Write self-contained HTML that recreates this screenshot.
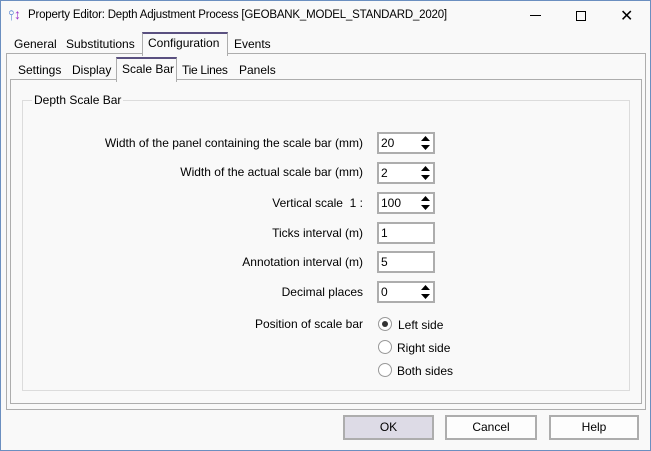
<!DOCTYPE html>
<html><head><style>
body{margin:0;width:651px;height:451px;overflow:hidden;background:#f9f9f9;font-family:"Liberation Sans",sans-serif;font-size:12px;color:#000;position:relative}
.a{position:absolute;white-space:nowrap}
.win{position:absolute;left:0;top:0;width:649px;height:449px;border:1px solid #6b8fc0}
.box{position:absolute;border:1px solid #adadad}
.lbl{position:absolute;right:288px;white-space:nowrap}
.inp{position:absolute;left:377px;width:52px;height:18px;border:2px solid #adadad;background:#fff;line-height:18px;padding-left:2px;box-sizing:content-box}
.spin{position:absolute;right:2px;top:1px;width:11px;height:16px}
.rad{position:absolute;left:378px;width:12px;height:12px;border:1px solid #999;border-radius:50%;background:#fff}
.btn{position:absolute;top:415px;height:21px;border:2px solid #adadad;background:#fdfdfd;text-align:center;line-height:21px}
</style></head><body>
<div class="win"></div>
<div class="a" style="left:8px;top:7px;color:#4477cc;font-size:14px">⫯</div>
<div class="a" style="left:14px;top:6px;color:#9933cc;font-size:14px">↕</div>
<div class="a" style="left:28px;top:9px;font-size:11.5px;letter-spacing:-0.2px">Property Editor: Depth Adjustment Process [GEOBANK_MODEL_STANDARD_2020]</div>
<div class="a" style="left:530px;top:15px;width:11px;height:1px;background:#000"></div>
<div class="a" style="left:576px;top:11px;width:8px;height:8px;border:1px solid #000"></div>
<div class="a" style="left:620px;top:6px;font-size:16px">✕</div>

<div class="box" style="left:6px;top:53px;width:638px;height:355px"></div>
<div class="a" style="left:142px;top:32px;width:84px;height:22px;background:#f9f9f9;border:1px solid #adadad;border-bottom:none;border-top:2px solid #5a5080"></div>
<div class="a" style="left:14px;top:37px">General</div>
<div class="a" style="left:66px;top:37px">Substitutions</div>
<div class="a" style="left:148px;top:36px">Configuration</div>
<div class="a" style="left:234px;top:37px">Events</div>

<div class="box" style="left:10px;top:79px;width:630px;height:323px"></div>
<div class="a" style="left:116px;top:57px;width:59px;height:23px;background:#f9f9f9;border:1px solid #adadad;border-bottom:none;border-top:2px solid #5a5080"></div>
<div class="a" style="left:18px;top:63px">Settings</div>
<div class="a" style="left:72px;top:63px">Display</div>
<div class="a" style="left:122px;top:62px">Scale Bar</div>
<div class="a" style="left:182px;top:63px;letter-spacing:-0.3px">Tie Lines</div>
<div class="a" style="left:239px;top:63px">Panels</div>

<div class="a" style="left:22px;top:100px;width:606px;height:289px;border:1px solid #dcdcdc"></div>
<div class="a" style="left:32px;top:93px;background:#f9f9f9;padding:0 2px">Depth Scale Bar</div>

<div class="lbl" style="top:136px">Width of the panel containing the scale bar (mm)</div>
<div class="lbl" style="top:165px">Width of the actual scale bar (mm)</div>
<div class="lbl" style="top:196px">Vertical scale&nbsp; 1 :</div>
<div class="lbl" style="top:226px">Ticks interval (m)</div>
<div class="lbl" style="top:255px">Annotation interval (m)</div>
<div class="lbl" style="top:285px">Decimal places</div>
<div class="lbl" style="top:317px">Position of scale bar</div>

<div class="inp" style="top:132px">20<svg class="spin" viewBox="0 0 11 16"><path d="M1 6L5.5 1L10 6Z M1 10L5.5 15L10 10Z" fill="#000"/></svg></div>
<div class="inp" style="top:162px">2<svg class="spin" viewBox="0 0 11 16"><path d="M1 6L5.5 1L10 6Z M1 10L5.5 15L10 10Z" fill="#000"/></svg></div>
<div class="inp" style="top:192px">100<svg class="spin" viewBox="0 0 11 16"><path d="M1 6L5.5 1L10 6Z M1 10L5.5 15L10 10Z" fill="#000"/></svg></div>
<div class="inp" style="top:222px">1</div>
<div class="inp" style="top:251px">5</div>
<div class="inp" style="top:281px">0<svg class="spin" viewBox="0 0 11 16"><path d="M1 6L5.5 1L10 6Z M1 10L5.5 15L10 10Z" fill="#000"/></svg></div>

<div class="rad" style="top:317px"><div style="position:absolute;left:3px;top:3px;width:6px;height:6px;border-radius:50%;background:#333"></div></div>
<div class="a" style="left:398px;top:318px">Left side</div>
<div class="rad" style="top:340px"></div>
<div class="a" style="left:397px;top:341px">Right side</div>
<div class="rad" style="top:363px"></div>
<div class="a" style="left:397px;top:364px">Both sides</div>

<div class="btn" style="left:343px;width:87px;background:#dddbe6">OK</div>
<div class="btn" style="left:445px;width:88px">Cancel</div>
<div class="btn" style="left:549px;width:86px">Help</div>
</body></html>
